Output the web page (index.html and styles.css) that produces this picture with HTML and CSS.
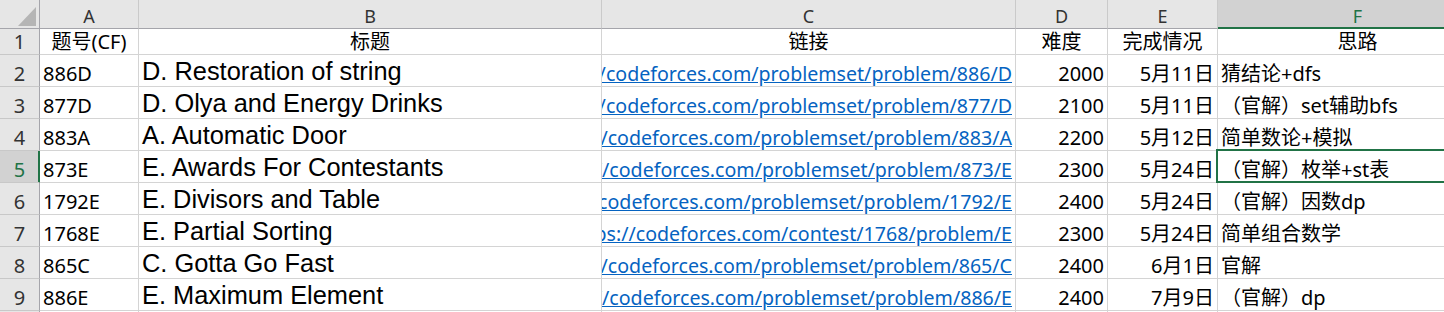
FILE: index.html
```html
<!DOCTYPE html>
<html lang="zh-CN">
<head>
<meta charset="utf-8">
<title>Sheet</title>
<link rel="stylesheet" href="styles.css">
</head>
<body>
<div class="sheet">
  <div class="row">
    <div class="cell corner"><div class="corner-tri"></div></div>
    <div class="cell colhead">A</div>
    <div class="cell colhead">B</div>
    <div class="cell colhead">C</div>
    <div class="cell colhead">D</div>
    <div class="cell colhead">E</div>
    <div class="cell colhead sel">F</div>
  </div>
  <div class="row">
    <div class="cell rowhead">1</div>
    <div class="cell center">题号(CF)</div>
    <div class="cell center">标题</div>
    <div class="cell center">链接</div>
    <div class="cell center">难度</div>
    <div class="cell center">完成情况</div>
    <div class="cell center">思路</div>
  </div>
  <div class="row">
    <div class="cell rowhead">2</div>
    <div class="cell">886D</div>
    <div class="cell title">D. Restoration of string</div>
    <div class="cell right"><a class="link">https://codeforces.com/problemset/problem/886/D</a></div>
    <div class="cell right">2000</div>
    <div class="cell right">5月11日</div>
    <div class="cell">猜结论+dfs</div>
  </div>
  <div class="row">
    <div class="cell rowhead">3</div>
    <div class="cell">877D</div>
    <div class="cell title">D. Olya and Energy Drinks</div>
    <div class="cell right"><a class="link">https://codeforces.com/problemset/problem/877/D</a></div>
    <div class="cell right">2100</div>
    <div class="cell right">5月11日</div>
    <div class="cell">（官解）set辅助bfs</div>
  </div>
  <div class="row">
    <div class="cell rowhead">4</div>
    <div class="cell">883A</div>
    <div class="cell title">A. Automatic Door</div>
    <div class="cell right"><a class="link">https://codeforces.com/problemset/problem/883/A</a></div>
    <div class="cell right">2200</div>
    <div class="cell right">5月12日</div>
    <div class="cell">简单数论+模拟</div>
  </div>
  <div class="row">
    <div class="cell rowhead sel">5</div>
    <div class="cell">873E</div>
    <div class="cell title">E. Awards For Contestants</div>
    <div class="cell right"><a class="link">https://codeforces.com/problemset/problem/873/E</a></div>
    <div class="cell right">2300</div>
    <div class="cell right">5月24日</div>
    <div class="cell active">（官解）枚举+st表<span class="active-frame"></span></div>
  </div>
  <div class="row">
    <div class="cell rowhead">6</div>
    <div class="cell">1792E</div>
    <div class="cell title">E. Divisors and Table</div>
    <div class="cell right"><a class="link">https://codeforces.com/problemset/problem/1792/E</a></div>
    <div class="cell right">2400</div>
    <div class="cell right">5月24日</div>
    <div class="cell">（官解）因数dp</div>
  </div>
  <div class="row">
    <div class="cell rowhead">7</div>
    <div class="cell">1768E</div>
    <div class="cell title">E. Partial Sorting</div>
    <div class="cell right"><a class="link">https://codeforces.com/contest/1768/problem/E</a></div>
    <div class="cell right">2300</div>
    <div class="cell right">5月24日</div>
    <div class="cell">简单组合数学</div>
  </div>
  <div class="row">
    <div class="cell rowhead">8</div>
    <div class="cell">865C</div>
    <div class="cell title">C. Gotta Go Fast</div>
    <div class="cell right"><a class="link">https://codeforces.com/problemset/problem/865/C</a></div>
    <div class="cell right">2400</div>
    <div class="cell right">6月1日</div>
    <div class="cell">官解</div>
  </div>
  <div class="row">
    <div class="cell rowhead">9</div>
    <div class="cell">886E</div>
    <div class="cell title">E. Maximum Element</div>
    <div class="cell right"><a class="link">https://codeforces.com/problemset/problem/886/E</a></div>
    <div class="cell right">2400</div>
    <div class="cell right">7月9日</div>
    <div class="cell">（官解）dp</div>
  </div>
  <div class="row">
    <div class="cell rowhead">10</div>
    <div class="cell"></div>
    <div class="cell"></div>
    <div class="cell"></div>
    <div class="cell"></div>
    <div class="cell"></div>
    <div class="cell"></div>
  </div>
</div>
</body>
</html>
```

FILE: styles.css
```css
html, body {
  margin: 0;
  padding: 0;
  overflow: hidden;
  background: #ffffff;
}

.sheet {
  display: grid;
  grid-template-columns: 40px 99px 463px 414px 92px 110px 280px;
  grid-template-rows: 29px 26px repeat(9, 32px);
  font-family: "Noto Sans", "Noto Sans CJK SC", sans-serif;
  font-size: 20px;
  line-height: 24px;
  color: #000000;
}

.row {
  display: contents;
}

.cell {
  box-sizing: border-box;
  border-right: 1px solid #d4d4d4;
  border-bottom: 1px solid #d4d4d4;
  display: flex;
  align-items: flex-end;
  padding: 0 3px;
  overflow: hidden;
  white-space: nowrap;
}

.center {
  justify-content: center;
}

.right {
  justify-content: flex-end;
}

.title {
  font-family: "Liberation Sans", Arial, sans-serif;
  font-size: 25.4px;
  padding-bottom: 3px;
}

.link {
  flex-shrink: 0;
  font-size: 19.6px;
  color: #0563c1;
  text-decoration: underline;
}

.corner {
  background: #e6e6e6;
  border-right-color: #a5a5ab;
  border-bottom-color: #a5a5ab;
  justify-content: flex-end;
  padding: 0 3px 2px 0;
}

.corner-tri {
  width: 18px;
  height: 19px;
  background: #b5b5b5;
  clip-path: polygon(100% 0, 100% 100%, 0 100%);
}

.colhead {
  background: #e6e6e6;
  border-right-color: #cacaca;
  border-bottom-color: #a5a5ab;
  justify-content: center;
  font-size: 18px;
  color: #333333;
}

.colhead.sel {
  background: #d2d2d2;
  color: #217346;
  border-bottom-color: #217346;
  box-shadow: inset 0 -1px 0 #217346;
}

.rowhead {
  background: #e6e6e6;
  border-right-color: #a5a5ab;
  border-bottom-color: #c8c8c8;
  justify-content: center;
  color: #333333;
}

.rowhead.sel {
  background: #d2d2d2;
  color: #217346;
  border-right-color: #217346;
  box-shadow: inset -1px 0 0 #217346;
}

.active {
  position: relative;
  overflow: visible;
}

.active-frame {
  position: absolute;
  top: -2px;
  left: -2px;
  right: -20px;
  bottom: -1px;
  border: 2px solid #217346;
  pointer-events: none;
}
```
